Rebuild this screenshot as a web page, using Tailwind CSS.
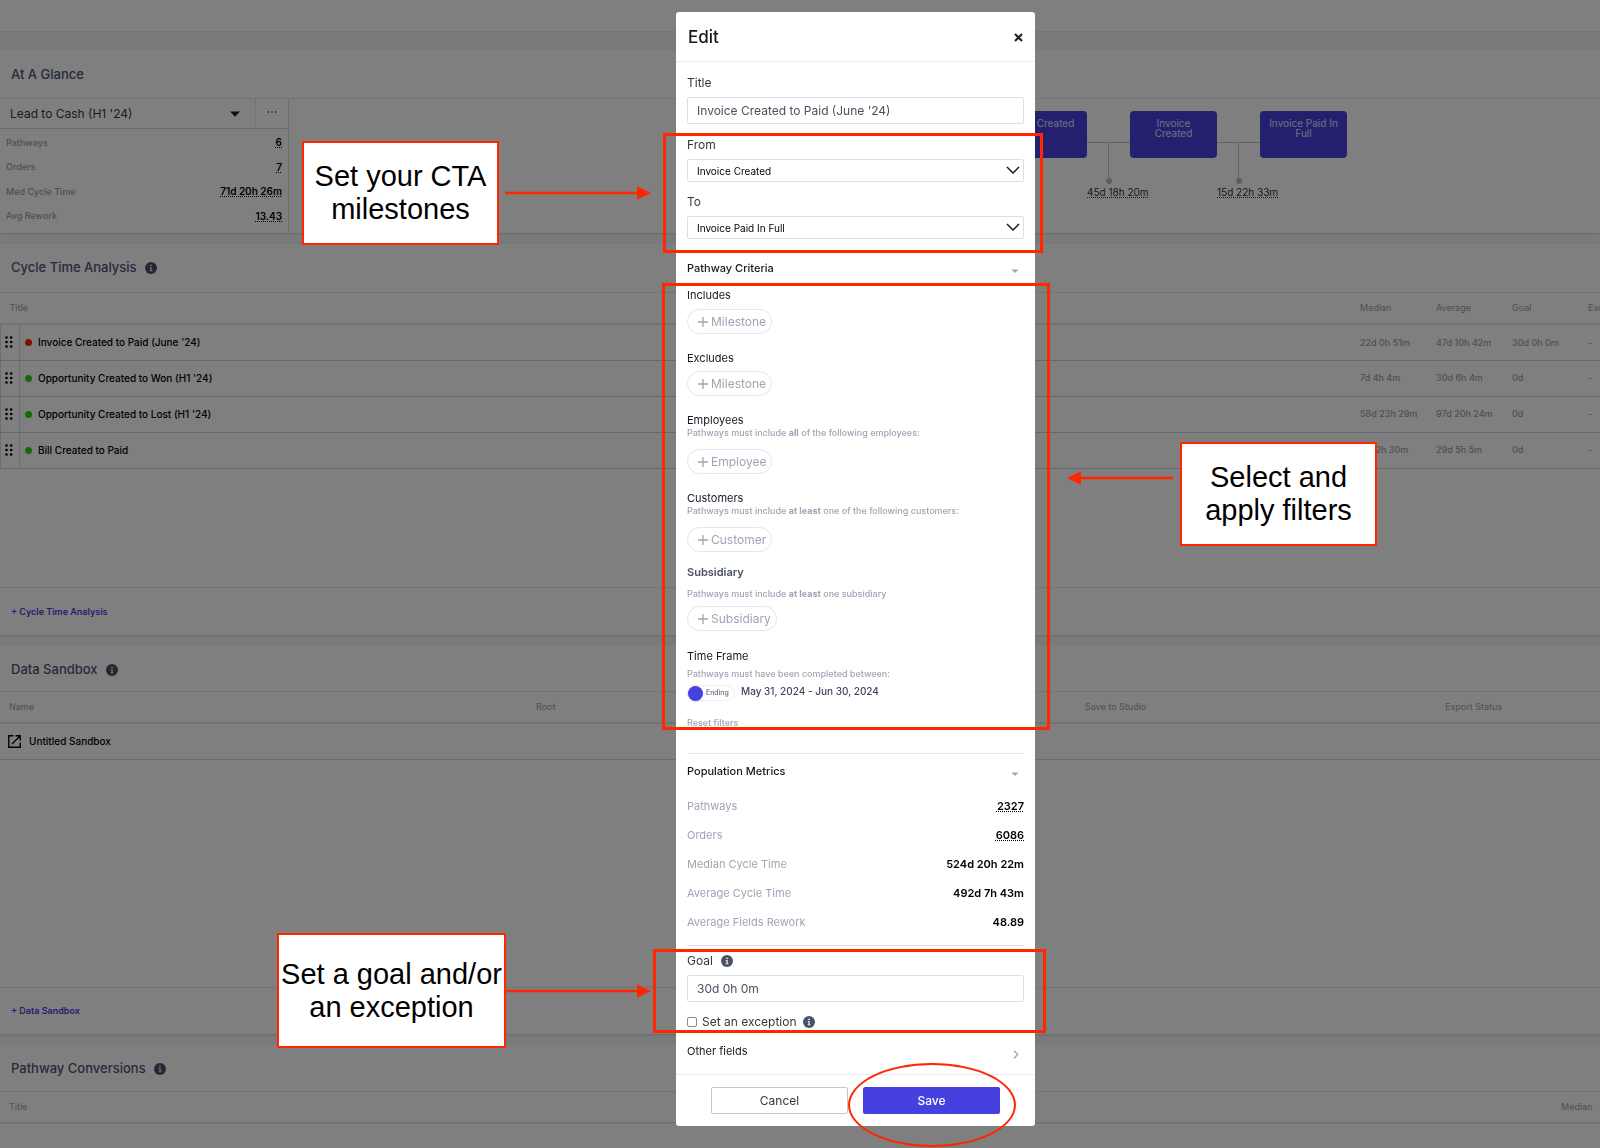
<!DOCTYPE html>
<html lang="en">
  <head>
    <meta charset="UTF-8" />
    <meta name="viewport" content="width=device-width, initial-scale=1.0" />
    <title>Edit Cycle Time Analysis</title>
    <script src="https://cdn.jsdelivr.net/npm/@tailwindcss/browser@4"></script>
  </head>
  <body class="font-['Inter',sans-serif] text-black text-[10px] h-screen overflow-hidden bg-[#f2f5f9]">
    <!-- Shared icons -->
    <svg class="hidden">
      <symbol id="info" viewBox="0 0 12 12">
        <circle cx="6" cy="6" r="6" fill="#4a5068" />
        <circle cx="6" cy="3.3" r="0.9" fill="#e4e6ee" />
        <path d="M4.8 5.1h1.9v3.2h.7v1H4.7v-1h.7V6h-.6z" fill="#e4e6ee" />
      </symbol>
      <symbol id="grip" viewBox="0 0 8 12">
        <g fill="#000">
          <circle cx="1.5" cy="1.5" r="1.3" /><circle cx="6.2" cy="1.5" r="1.3" />
          <circle cx="1.5" cy="6" r="1.3" /><circle cx="6.2" cy="6" r="1.3" />
          <circle cx="1.5" cy="10.5" r="1.3" /><circle cx="6.2" cy="10.5" r="1.3" />
        </g>
      </symbol>
      <symbol id="plus" viewBox="0 0 12 12">
        <path d="M6 1v10M1 6h10" stroke="#a0a4b4" stroke-width="1.3" fill="none" />
      </symbol>
      <symbol id="caret" viewBox="0 0 8 4">
        <path d="M0.5 0.5h7L4 4z" fill="#a0a4b4" />
      </symbol>
      <symbol id="chevron" viewBox="0 0 14 8">
        <path d="M1 1l6 6 6-6" stroke="#111" stroke-width="1.4" fill="none" />
      </symbol>
    </svg>

    <!-- Page behind the modal -->
    <main class="flex flex-col">
      <div class="h-8 bg-white border-b border-[#e6eaf0] mb-[18px]"></div>

      <section class="bg-white shadow mb-[11px]">
        <h2 class="h-12 flex items-center pl-[11px] pt-[2px] text-[13px] font-medium text-[#4e5672]">At A Glance</h2>
        <div class="flex border-t border-[#e2e6ec] h-[135px]">
          <div class="w-[289px] border-r border-[#d5dae2]">
            <div class="flex h-[30px] border-b border-[#d5dae2]">
              <button class="flex-1 flex items-center justify-between pl-[10px] pr-[15px] text-[12px] text-[#33384c] border-r border-[#e2e6ec]">
                Lead to Cash (H1 '24)
                <svg class="w-[10px] h-[6px]" viewBox="0 0 10 6"><path d="M0 .5h10L5 5.7z" fill="#222" /></svg>
              </button>
              <button class="w-8 flex justify-center items-center pb-1" aria-label="More">
                <svg class="w-[10px] h-[2px]" viewBox="0 0 10 2"><g fill="#888"><circle cx="1" cy="1" r="1" /><circle cx="5" cy="1" r="1" /><circle cx="9" cy="1" r="1" /></g></svg>
              </button>
            </div>
            <dl class="px-[6px] pt-px text-[9px] text-[#9a9eae]">
              <div class="flex items-center justify-between h-[25px]"><dt class="font-medium">Pathways</dt><dd class="text-[10px] font-semibold text-black underline decoration-dotted underline-offset-1">6</dd></div>
              <div class="flex items-center justify-between h-[24px]"><dt class="font-medium">Orders</dt><dd class="text-[10px] font-semibold text-black underline decoration-dotted underline-offset-1">7</dd></div>
              <div class="flex items-center justify-between h-[25px]"><dt class="font-medium">Med Cycle Time</dt><dd class="text-[10px] font-semibold text-black underline decoration-dotted underline-offset-1">71d 20h 26m</dd></div>
              <div class="flex items-center justify-between h-[24px]"><dt class="font-medium">Avg Rework</dt><dd class="text-[10px] font-semibold text-black underline decoration-dotted underline-offset-1">13.43</dd></div>
            </dl>
          </div>
          <div class="flex-1 flex justify-end items-start pt-[12px] pr-[253px] text-[10px] leading-[10px] text-center">
            <div class="w-[87px] h-[47px] rounded-sm bg-[#4640de] text-[#e0e0f4] px-1 pt-[7px]">Deal Created</div>
            <div class="w-[43px] pt-[31px] flex flex-col items-center">
              <div class="w-full h-px bg-[#c4c4c4]"></div>
              <div class="w-px h-[35px] bg-[#c4c4c4]"></div>
              <div class="size-[6px] rounded-full bg-[#bdbdbd]"></div>
              <span class="self-start whitespace-nowrap leading-[16px] text-[#333] underline decoration-dotted underline-offset-1">45d 18h 20m</span>
            </div>
            <div class="w-[87px] h-[47px] rounded-sm bg-[#4640de] text-[#e0e0f4] px-4 pt-[7px]">Invoice Created</div>
            <div class="w-[43px] pt-[31px] flex flex-col items-center">
              <div class="w-full h-px bg-[#c4c4c4]"></div>
              <div class="w-px h-[35px] bg-[#c4c4c4]"></div>
              <div class="size-[6px] rounded-full bg-[#bdbdbd]"></div>
              <span class="self-start whitespace-nowrap leading-[16px] text-[#333] underline decoration-dotted underline-offset-1">15d 22h 33m</span>
            </div>
            <div class="w-[87px] h-[47px] rounded-sm bg-[#4640de] text-[#e0e0f4] px-1 pt-[7px]">Invoice Paid In Full</div>
          </div>
        </div>
      </section>

      <section class="bg-white shadow mb-[10px]">
        <h2 class="h-12 flex items-center gap-2 pl-[11px] text-[13px] font-medium text-[#4e5672]">Cycle Time Analysis <svg class="size-3"><use href="#info" /></svg></h2>
        <div class="min-h-[295px] border-t border-[#e2e6ec]">
          <table class="w-full table-fixed text-left whitespace-nowrap">
            <thead>
              <tr class="h-[31px] text-[9px] text-[#9a9eae] border-b-2 border-[#e2e6ec]">
                <th class="w-[19px] pl-[9px] font-normal">Title</th>
                <th></th>
                <th class="w-[76px] font-normal">Median</th>
                <th class="w-[76px] font-normal">Average</th>
                <th class="w-[76px] font-normal">Goal</th>
                <th class="w-[12px] font-normal">Exception</th>
              </tr>
            </thead>
            <tbody class="text-[9px] font-medium text-[#9a9eae]">
              <tr class="h-9 border-b border-[#c9d2d6]">
                <td class="border-x border-[#d5dae2]"><svg class="w-2 h-3 ml-1"><use href="#grip" /></svg></td>
                <td class="pl-[5px] pt-px text-[10px] text-black"><span class="inline-block size-[7px] rounded-full bg-[#f5220b] mr-[6px]"></span>Invoice Created to Paid (June '24)</td>
                <td>22d 0h 51m</td><td>47d 10h 42m</td><td>30d 0h 0m</td><td>-</td>
              </tr>
              <tr class="h-9 border-b border-[#c9d2d6]">
                <td class="border-x border-[#d5dae2]"><svg class="w-2 h-3 ml-1"><use href="#grip" /></svg></td>
                <td class="pl-[5px] pt-px text-[10px] text-black"><span class="inline-block size-[7px] rounded-full bg-[#2ed00e] mr-[6px]"></span>Opportunity Created to Won (H1 '24)</td>
                <td>7d 4h 4m</td><td>30d 6h 4m</td><td>0d</td><td>-</td>
              </tr>
              <tr class="h-9 border-b border-[#c9d2d6]">
                <td class="border-x border-[#d5dae2]"><svg class="w-2 h-3 ml-1"><use href="#grip" /></svg></td>
                <td class="pl-[5px] pt-px text-[10px] text-black"><span class="inline-block size-[7px] rounded-full bg-[#2ed00e] mr-[6px]"></span>Opportunity Created to Lost (H1 '24)</td>
                <td>58d 23h 29m</td><td>97d 20h 24m</td><td>0d</td><td>-</td>
              </tr>
              <tr class="h-9 border-b border-[#c9d2d6]">
                <td class="border-x border-[#d5dae2]"><svg class="w-2 h-3 ml-1"><use href="#grip" /></svg></td>
                <td class="pl-[5px] pt-px text-[10px] text-black"><span class="inline-block size-[7px] rounded-full bg-[#2ed00e] mr-[6px]"></span>Bill Created to Paid</td>
                <td>11d 2h 30m</td><td>29d 5h 5m</td><td>0d</td><td>-</td>
              </tr>
            </tbody>
          </table>
        </div>
        <div class="h-12 border-t border-[#e2e6ec] flex items-center pl-[11px]">
          <a href="#" class="text-[9px] font-semibold text-[#4640de]">+ Cycle Time Analysis</a>
        </div>
      </section>

      <section class="bg-white shadow mb-[11px]">
        <h2 class="h-[46px] flex items-center gap-2 pl-[11px] pt-1 text-[13px] font-medium text-[#4e5672]">Data Sandbox <svg class="size-3"><use href="#info" /></svg></h2>
        <div class="min-h-[296px] border-t border-[#e2e6ec]">
          <table class="w-full table-fixed text-left">
            <thead>
              <tr class="h-[31px] text-[9px] text-[#9a9eae] border-b-2 border-[#e2e6ec]">
                <th class="w-[33%] pl-[9px] font-normal">Name</th>
                <th class="w-[34%] pl-[8px] font-normal">Root</th>
                <th class="w-[23%] pl-[13px] font-normal">Save to Studio</th>
                <th class="pl-[5px] font-normal">Export Status</th>
              </tr>
            </thead>
            <tbody>
              <tr class="h-9 border-b border-[#d5dae2]">
                <td colspan="4" class="pl-2">
                  <a href="#" class="flex items-center gap-2 font-medium">
                    <svg class="size-[13px]" viewBox="0 0 13 13" fill="none" stroke="#000" stroke-width="1.4"><path d="M5.5 .8H.8v11.4h11.4V7.5M7.5 .8h4.7v4.7M12 1L4 9" /></svg>
                    Untitled Sandbox
                  </a>
                </td>
              </tr>
            </tbody>
          </table>
        </div>
        <div class="h-[47px] border-t border-[#e2e6ec] flex items-center pl-[11px]">
          <a href="#" class="text-[9px] font-semibold text-[#4640de]">+ Data Sandbox</a>
        </div>
      </section>

      <section class="bg-white">
        <h2 class="h-[46px] flex items-center gap-2 pl-[11px] pt-[2px] text-[13px] font-medium text-[#4e5672]">Pathway Conversions <svg class="size-3"><use href="#info" /></svg></h2>
        <div class="h-[60px] border-t border-[#e2e6ec]">
          <table class="w-full table-fixed text-left">
            <thead>
              <tr class="h-[31px] text-[9px] text-[#9a9eae] border-b-2 border-[#e2e6ec]">
                <th class="pl-[9px] font-normal">Title</th>
                <th class="w-[39px] font-normal">Median</th>
              </tr>
            </thead>
          </table>
        </div>
      </section>
    </main>

    <!-- Modal -->
    <div class="fixed inset-0 bg-black/50 flex justify-center items-start pl-[111px] pt-[12px] overflow-hidden">
      <div class="relative w-[359px]">
        <form class="bg-white rounded-[3px] text-[12px] leading-4 text-[#33373f]" role="dialog" aria-labelledby="dialog-title">
          <header class="h-[50px] px-[12px] flex items-center justify-between border-b border-[#ececf0]">
            <h1 id="dialog-title" class="text-[17px] font-medium text-[#15181f]">Edit</h1>
            <button type="button" aria-label="Close" class="pt-px">
              <svg class="size-[9px]" viewBox="0 0 9 9"><path d="M1 1l7 7M8 1L1 8" stroke="#222" stroke-width="2.2" /></svg>
            </button>
          </header>

          <div class="px-[11px] pt-[13px]">
            <label for="title" class="block">Title</label>
            <input id="title" type="text" value="Invoice Created to Paid (June '24)" class="mt-[6px] block w-full h-[27px] border border-[#dcdfe6] rounded-[2px] px-[9px] text-[#4a5060]" />

            <label for="from" class="block mt-[13px]">From</label>
            <div class="relative mt-[6px]">
              <select id="from" class="appearance-none block w-full h-[23px] border border-[#dcdfe6] rounded-[2px] px-[9px] text-[10px] text-black bg-white"><option>Invoice Created</option></select>
              <svg class="absolute right-[4px] top-[7px] w-[14px] h-[8px] pointer-events-none"><use href="#chevron" /></svg>
            </div>

            <label for="to" class="block mt-[12px]">To</label>
            <div class="relative mt-[6px]">
              <select id="to" class="appearance-none block w-full h-[23px] border border-[#dcdfe6] rounded-[2px] px-[9px] text-[10px] text-black bg-white"><option>Invoice Paid In Full</option></select>
              <svg class="absolute right-[4px] top-[7px] w-[14px] h-[8px] pointer-events-none"><use href="#chevron" /></svg>
            </div>

            <button type="button" class="mt-[21px] w-full flex items-center justify-between text-[11px] text-[#15181f] font-medium pr-[5px]">Pathway Criteria <svg class="w-2 h-1 mt-[6px]"><use href="#caret" /></svg></button>

            <h3 class="mt-[11px] text-[11px] text-[#15181f]">Includes</h3>
            <button type="button" class="mt-[6px] h-[25px] rounded-full border border-[#e6e7ec] pl-[9px] pr-[5px] flex items-center gap-[2px] text-[#a0a4b4]"><svg class="size-3"><use href="#plus" /></svg>Milestone</button>

            <h3 class="mt-[16px] text-[11px] text-[#15181f]">Excludes</h3>
            <button type="button" class="mt-[5px] h-[25px] rounded-full border border-[#e6e7ec] pl-[9px] pr-[5px] flex items-center gap-[2px] text-[#a0a4b4]"><svg class="size-3"><use href="#plus" /></svg>Milestone</button>

            <h3 class="mt-[16px] text-[11px] text-[#15181f]">Employees</h3>
            <p class="text-[9px] leading-[10px] font-medium text-[#a0a4b4]">Pathways must include <b class="font-bold">all</b> of the following employees:</p>
            <button type="button" class="mt-[11px] h-[25px] rounded-full border border-[#e6e7ec] pl-[9px] pr-[5px] flex items-center gap-[2px] text-[#a0a4b4]"><svg class="size-3"><use href="#plus" /></svg>Employee</button>

            <h3 class="mt-[16px] text-[11px] text-[#15181f]">Customers</h3>
            <p class="text-[9px] leading-[10px] font-medium text-[#a0a4b4]">Pathways must include <b class="font-bold">at least</b> one of the following customers:</p>
            <button type="button" class="mt-[11px] h-[25px] rounded-full border border-[#e6e7ec] pl-[9px] pr-[5px] flex items-center gap-[2px] text-[#a0a4b4]"><svg class="size-3"><use href="#plus" /></svg>Customer</button>

            <h3 class="mt-[12px] text-[11px] font-semibold text-[#4a5068]">Subsidiary</h3>
            <p class="mt-[9px] text-[9px] leading-[10px] font-medium text-[#a0a4b4]">Pathways must include <b class="font-bold">at least</b> one subsidiary</p>
            <button type="button" class="mt-[7px] h-[25px] rounded-full border border-[#e6e7ec] pl-[9px] pr-[5px] flex items-center gap-[2px] text-[#a0a4b4]"><svg class="size-3"><use href="#plus" /></svg>Subsidiary</button>

            <h3 class="mt-[17px] text-[11px] text-[#15181f]">Time Frame</h3>
            <p class="mt-[5px] text-[9px] leading-[10px] font-medium text-[#a0a4b4]">Pathways must have been completed between:</p>
            <div class="mt-[6px] flex items-start gap-[6px]">
              <button type="button" role="switch" aria-checked="false" class="w-12 h-4 flex items-center gap-[3px] rounded-full border border-[#f0f0f4] text-[7px] text-[#4a5068]"><span class="size-[15px] rounded-full bg-[#4640de] shadow-sm"></span>Ending</button>
              <span class="text-[10px] leading-[12px] font-medium text-[#3f4560]">May 31, 2024 - Jun 30, 2024</span>
            </div>
            <button type="button" class="mt-[15px] block text-[9px] leading-[14px] font-medium text-[#a0a4b4]">Reset filters</button>

            <div class="mt-[23px] border-t border-[#e6e7ec]"></div>
            <button type="button" class="mt-[9px] w-full flex items-center justify-between text-[11px] text-[#15181f] font-medium pr-[5px]">Population Metrics <svg class="w-2 h-1 mt-[6px]"><use href="#caret" /></svg></button>

            <dl class="mt-[12px] text-[11px] text-[#a0a4b4]">
              <div class="h-[29px] flex items-center justify-between"><dt>Pathways</dt><dd class="font-semibold text-black underline decoration-dotted underline-offset-1">2327</dd></div>
              <div class="h-[29px] flex items-center justify-between"><dt>Orders</dt><dd class="font-semibold text-black underline decoration-dotted underline-offset-1">6086</dd></div>
              <div class="h-[29px] flex items-center justify-between"><dt>Median Cycle Time</dt><dd class="font-semibold text-black">524d 20h 22m</dd></div>
              <div class="h-[29px] flex items-center justify-between"><dt>Average Cycle Time</dt><dd class="font-semibold text-black">492d 7h 43m</dd></div>
              <div class="h-[29px] flex items-center justify-between"><dt>Average Fields Rework</dt><dd class="font-semibold text-black">48.89</dd></div>
            </dl>
            <div class="mt-[9px] border-t border-[#dcdfe6]"></div>

            <div class="mt-[7px] flex items-center gap-2"><label for="goal">Goal</label><svg class="size-3"><use href="#info" /></svg></div>
            <input id="goal" type="text" value="30d 0h 0m" class="mt-[6px] block w-full h-[27px] border border-[#dcdfe6] rounded-[2px] px-[9px] text-[#4a5060]" />
            <div class="mt-[12px] flex items-center">
              <input id="exception" type="checkbox" class="appearance-none size-[10px] border border-[#8a8a8a] rounded-[2px] mr-[5px]" />
              <label for="exception">Set an exception</label>
              <svg class="size-3 ml-[6px]"><use href="#info" /></svg>
            </div>
            <button type="button" class="mt-[13px] mb-[15px] w-full flex items-center justify-between text-[11px] text-[#15181f] pr-[5px]">Other fields
              <svg class="w-[6px] h-[9px] mt-[6px]" viewBox="0 0 6 9"><path d="M1 .7l3.8 3.8L1 8.3" stroke="#a0a4b4" stroke-width="1.3" fill="none" /></svg>
            </button>
          </div>

          <footer class="border-t border-[#ececf0] py-[12px] flex justify-center gap-[15px]">
            <button type="button" class="w-[137px] h-[27px] border border-[#c4c7cf] rounded-[2px] text-[#33373f]">Cancel</button>
            <button type="submit" class="w-[137px] h-[27px] rounded-[2px] bg-[#4640de] text-white font-medium">Save</button>
          </footer>
        </form>

        <!-- Annotations, placed relative to the modal -->
        <div class="font-['Liberation_Sans',Arial,sans-serif] text-[29px] leading-[33px] text-black text-center pointer-events-none">
          <div class="absolute left-[-13px] top-[121px] w-[380px] h-[120px] border-[3px] border-[#ff2600]"></div>
          <div class="absolute left-[-14px] top-[271px] w-[388px] h-[447px] border-[3px] border-[#ff2600]"></div>
          <div class="absolute left-[-23px] top-[937px] w-[393px] h-[84px] border-[3px] border-[#ff2600]"></div>
          <div class="absolute left-[172px] top-[1051px] w-[168px] h-[84px] border-2 border-[#ff2600] rounded-[50%]"></div>

          <p class="absolute left-[-374px] top-[129px] w-[197px] h-[104px] border-2 border-[#ff2600] bg-white flex items-center justify-center">Set your CTA<br />milestones</p>
          <svg class="absolute left-[-171px] top-[174px] w-[146px] h-[14px]" viewBox="0 0 146 14"><path d="M0 5.8h132V.3L146 7l-14 6.7V8.2H0z" fill="#ff2600" /></svg>

          <p class="absolute left-[504px] top-[430px] w-[197px] h-[104px] border-2 border-[#ff2600] bg-white flex items-center justify-center">Select and<br />apply filters</p>
          <svg class="absolute left-[391px] top-[459px] w-[106px] h-[14px]" viewBox="0 0 106 14"><path d="M106 5.8H14V.3L0 7l14 6.7V8.2h92z" fill="#ff2600" /></svg>

          <p class="absolute left-[-399px] top-[921px] w-[229px] h-[115px] border-2 border-[#ff2600] bg-white flex items-center justify-center whitespace-nowrap">Set a goal and/or<br />an exception</p>
          <svg class="absolute left-[-171px] top-[972px] w-[146px] h-[14px]" viewBox="0 0 146 14"><path d="M0 5.8h132V.3L146 7l-14 6.7V8.2H0z" fill="#ff2600" /></svg>
        </div>
      </div>
    </div>
  </body>
</html>
